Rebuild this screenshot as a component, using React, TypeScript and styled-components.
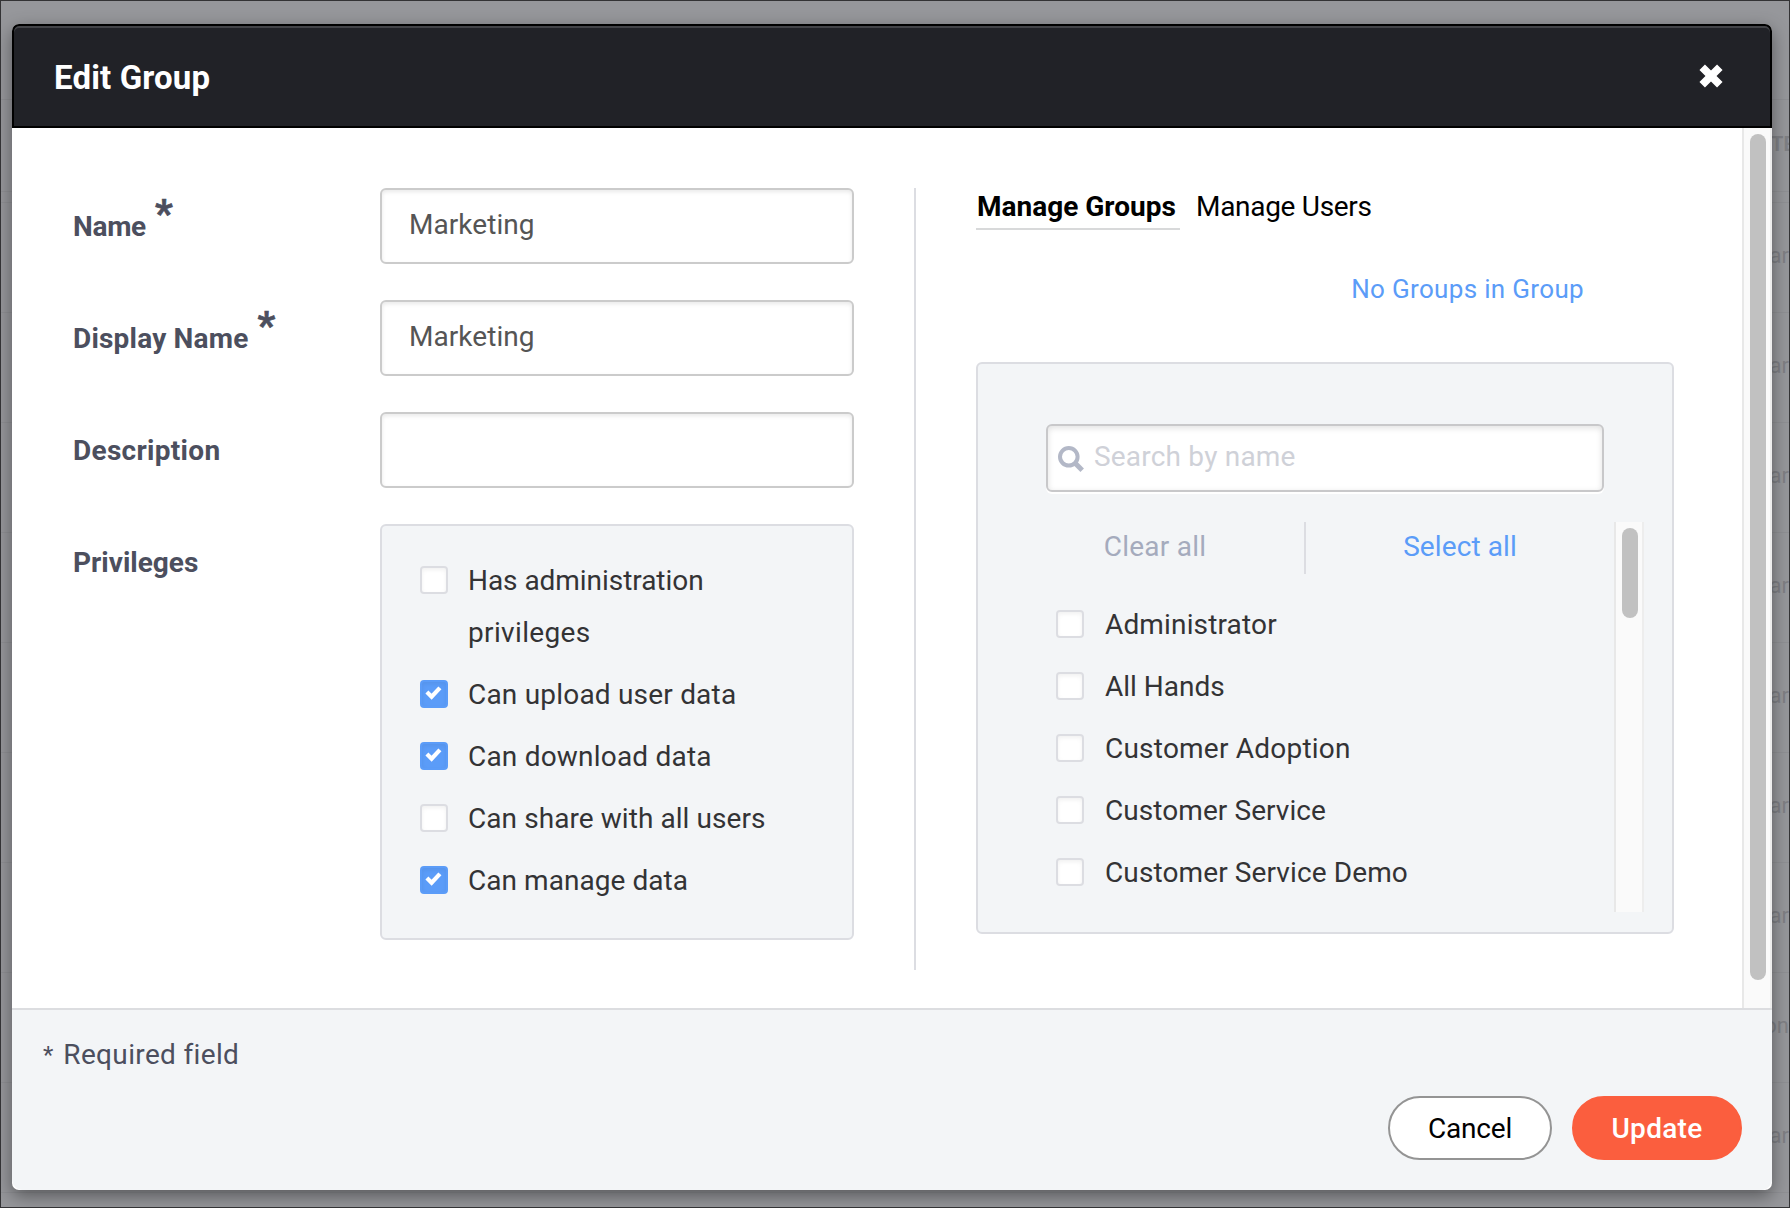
import React, { useState } from "react";
import styled, { createGlobalStyle, css } from "styled-components";

const ink = "#333335";
const slate = "#4c4f5e";
const blue = "#5b9cf8";
const line = "#dcdde2";
const panel = "#f3f5f7";

const GlobalStyle = createGlobalStyle`
  *, *::before, *::after { box-sizing: border-box; }
  body {
    margin: 0;
    overflow: hidden;
    font-family: Roboto, "Liberation Sans", sans-serif;
    font-size: 28px;
    color: ${ink};
  }
`;

const Page = styled.div`
  position: relative;
  width: 1790px;
  height: 1208px;
  border: 1px solid #333335;
  overflow: hidden;
  background: #96979b;
  padding: 23px 17px 17px 11px;
`;

const Backdrop = styled.div`
  position: absolute;
  inset: 0;
  display: flex;
  flex-direction: column;
`;

const BackBand = styled.div<{ $h: number }>`
  flex: none;
  height: ${(p) => p.$h}px;
  border-bottom: 1px solid #8f9094;
  display: flex;
  justify-content: flex-end;
`;

const BackText = styled.span<{ $bold?: boolean; $top: number }>`
  width: ${(p) => (p.$bold ? "18px" : "auto")};
  margin-top: ${(p) => p.$top}px;
  white-space: nowrap;
  color: #7f8085;
  font-size: ${(p) => (p.$bold ? 20 : 22)}px;
  font-weight: ${(p) => (p.$bold ? 700 : 400)};
  line-height: 32px;
`;

const Modal = styled.div`
  position: relative;
  width: 1760px;
  height: 1166px;
  display: flex;
  flex-direction: column;
  background: #fff;
  border-radius: 7px;
  box-shadow: 0 6px 18px rgba(0, 0, 0, 0.42);
`;

const Header = styled.header`
  flex: none;
  height: 104px;
  display: flex;
  align-items: center;
  justify-content: space-between;
  padding: 0 47px 0 40px;
  border: 2px solid #000;
  border-radius: 7px 7px 0 0;
  background: #212227;
  box-shadow: inset 0 2px 0 #434448;
`;

const Title = styled.h1`
  margin: 3px 0 0;
  color: #fff;
  font-size: 33px;
  line-height: 40px;
  font-weight: 700;
  letter-spacing: 0.15px;
`;

const CloseButton = styled.button`
  display: flex;
  padding: 0;
  border: 0;
  background: none;
  svg { display: block; }
`;

const Body = styled.div`
  flex: none;
  height: 880px;
  display: flex;
`;

const Content = styled.div`
  flex: 1;
  display: flex;
  padding: 60px 0 0 61px;
`;

const Form = styled.div`
  width: 781px;
  margin-right: 60px;
  display: flex;
  flex-direction: column;
  gap: 36px;
`;

const Field = styled.div`
  display: flex;
`;

const Label = styled.label<{ $ls?: number }>`
  width: 307px;
  padding-top: 18px;
  line-height: 42px;
  font-weight: 700;
  color: ${slate};
  letter-spacing: ${(p) => p.$ls ?? 0}px;
`;

const Required = styled.sup`
  margin-left: 9px;
  font-size: 39px;
  line-height: 0;
  vertical-align: 9px;
  -webkit-text-stroke: 0.7px ${slate};
`;

const Input = styled.input`
  width: 474px;
  height: 76px;
  padding: 0 27px 4px;
  border: 2px solid #cbcbcb;
  border-radius: 6px;
  background: #fff;
  box-shadow: inset 0 2px 4px rgba(0, 0, 0, 0.09);
  color: #555;
  font: inherit;
  letter-spacing: 0.05px;
  outline: none;
`;

const Panel = styled.div`
  border: 2px solid ${line};
  border-radius: 6px;
  background: ${panel};
`;

const Privileges = styled(Panel)`
  width: 474px;
  height: 416px;
  padding: 28px 38px 0;
  display: flex;
  flex-direction: column;
  gap: 10px;
`;

const CheckRow = styled.label<{ $gap: number }>`
  display: flex;
  gap: ${(p) => p.$gap}px;
  line-height: 52px;
`;

const CheckText = styled.span<{ $ls: number; $firstLs?: number }>`
  margin: 1px 0 -1px;
  letter-spacing: ${(p) => p.$ls}px;
  ${(p) => p.$firstLs !== undefined && css`
    &::first-line { letter-spacing: ${p.$firstLs}px; }
  `}
`;

const Box = styled.span<{ $on?: boolean }>`
  flex: none;
  width: 28px;
  height: 28px;
  margin-top: 12px;
  border-radius: 4px;
  border: 2px solid ${line};
  background: #fff;
  box-shadow: inset 0 2px 4px rgba(0, 0, 0, 0.06);
  ${(p) => p.$on && css`
    border-color: ${blue};
    background: ${blue};
  `}
  svg { display: block; }
`;

const Divider = styled.div<{ $h: number }>`
  flex: none;
  width: 2px;
  height: ${(p) => p.$h}px;
  background: ${line};
`;

const Members = styled.section`
  width: 698px;
  margin-left: 60px;
  display: flex;
  flex-direction: column;
`;

const Tabs = styled.nav`
  display: flex;
  gap: 16px;
  height: 42px;
`;

const Tab = styled.button<{ $active?: boolean; $ls: number }>`
  width: ${(p) => (p.$active ? 204 : 190)}px;
  padding: 0 0 4px ${(p) => (p.$active ? 1 : 0)}px;
  border: 0;
  border-bottom: 2px solid ${(p) => (p.$active ? "#d8d9da" : "transparent")};
  background: none;
  color: #000;
  font: inherit;
  font-weight: ${(p) => (p.$active ? 700 : 400)};
  text-align: left;
  white-space: nowrap;
  letter-spacing: ${(p) => p.$ls}px;
`;

const Summary = styled.p`
  margin: 42px 0 0;
  padding-right: 90px;
  height: 90px;
  line-height: 34px;
  text-align: right;
  font-size: 26px;
  color: ${blue};
  letter-spacing: 0.33px;
`;

const Picker = styled(Panel)`
  height: 572px;
  padding: 60px 28px 0;
`;

const Search = styled.div`
  width: 558px;
  height: 68px;
  margin-left: 40px;
  padding: 0 10px;
  display: flex;
  align-items: center;
  gap: 10px;
  border: 2px solid #c8c8ca;
  border-radius: 6px;
  background: #fff;
  box-shadow: inset 0 2px 6px rgba(0, 0, 0, 0.12), 0 2px 0 #fff;
  svg { flex: none; margin-top: 2px; }
`;

const SearchInput = styled.input`
  flex: 1;
  min-width: 0;
  padding: 0 0 4px;
  border: 0;
  outline: 0;
  background: none;
  font: inherit;
  letter-spacing: 0.2px;
  &::placeholder { color: #cfd1d8; opacity: 1; }
`;

const ListArea = styled.div`
  display: flex;
  height: 390px;
  margin-top: 30px;
`;

const List = styled.div`
  width: 608px;
`;

const Actions = styled.div`
  display: flex;
  height: 52px;
`;

const Action = styled.button<{ $muted?: boolean }>`
  width: ${(p) => (p.$muted ? 298 : 308)}px;
  padding: 0 0 4px;
  border: 0;
  background: none;
  font: inherit;
  letter-spacing: ${(p) => (p.$muted ? 0.25 : 0.1)}px;
  color: ${(p) => (p.$muted ? "#a5abbd" : blue)};
`;

const Groups = styled.div`
  margin-top: 24px;
  padding-left: 50px;
  display: flex;
  flex-direction: column;
  gap: 10px;
`;

const Track = styled.div`
  flex: none;
  width: 30px;
  padding: 6px;
  border-left: 2px solid #e8e8e8;
  border-right: 2px solid #ededed;
  background: #fafafa;
`;

const Thumb = styled.div<{ $h: number }>`
  width: 16px;
  height: ${(p) => p.$h}px;
  border-radius: 8px;
  background: #c1c1c1;
`;

const Footer = styled.footer`
  flex: 1;
  display: flex;
  flex-direction: column;
  justify-content: space-between;
  padding: 25px 30px 30px 31px;
  border-top: 2px solid #dcdde0;
  border-radius: 0 0 11px 11px;
  background: ${panel};
`;

const Hint = styled.p`
  margin: 0;
  line-height: 40px;
  color: ${slate};
  letter-spacing: 0.35px;
`;

const Star = styled.span`
  display: inline-block;
  width: 13px;
  font-size: 24px;
  line-height: 1;
  vertical-align: 1px;
`;

const Buttons = styled.div`
  display: flex;
  justify-content: flex-end;
  gap: 20px;
`;

const Button = styled.button<{ $primary?: boolean }>`
  width: ${(p) => (p.$primary ? 170 : 164)}px;
  height: 64px;
  padding: 0;
  border-radius: 32px;
  border: 2px solid ${(p) => (p.$primary ? "#fb5e3e" : "#949494")};
  background: ${(p) => (p.$primary ? "#fb5e3e" : "#fff")};
  color: ${(p) => (p.$primary ? "#fff" : "#000")};
  font: inherit;
  font-weight: ${(p) => (p.$primary ? 500 : 400)};
  letter-spacing: ${(p) => (p.$primary ? 0.3 : -0.2)}px;
`;

const Check = () => (
  <svg width="24" height="24" viewBox="0 0 24 24" fill="none">
    <path d="M4.9 10.1 9.6 14.8 17.9 5.9" stroke="#fff" strokeWidth="4.2" />
  </svg>
);

type Item = { label: string; on?: boolean; ls: number; firstLs?: number };

const CheckItem = ({ label, on, ls, firstLs, gap }: Item & { gap: number }) => {
  const [checked, setChecked] = useState(!!on);
  return (
    <CheckRow $gap={gap} onClick={() => setChecked(!checked)}>
      <Box $on={checked}>{checked && <Check />}</Box>
      <CheckText $ls={ls} $firstLs={firstLs}>{label}</CheckText>
    </CheckRow>
  );
};

const privileges: Item[] = [
  { label: "Has administration privileges", ls: 0.35, firstLs: -0.05 },
  { label: "Can upload user data", on: true, ls: 0.2 },
  { label: "Can download data", on: true, ls: 0.2 },
  { label: "Can share with all users", ls: 0.07 },
  { label: "Can manage data", on: true, ls: 0.05 },
];

const groups: Item[] = [
  { label: "Administrator", ls: 0.15 },
  { label: "All Hands", ls: 0 },
  { label: "Customer Adoption", ls: 0.22 },
  { label: "Customer Service", ls: 0.07 },
  { label: "Customer Service Demo", ls: 0.11 },
];

const backRows = ["ar", "ar", "ar", "ar", "ar", "ar", "ar", "on", "ar"];

export default function App() {
  return (
    <>
      <GlobalStyle />
      <Page>
        <Backdrop>
          <BackBand $h={99} />
          <BackBand $h={92}><BackText $bold $top={28}>TE</BackText></BackBand>
          <BackBand $h={11} />
          {backRows.map((t, i) => (
            <BackBand key={i} $h={110}><BackText $top={37}>{t}</BackText></BackBand>
          ))}
        </Backdrop>
        <Modal>
          <Header>
            <Title>Edit Group</Title>
            <CloseButton aria-label="Close">
              <svg width="24" height="24" viewBox="0 0 24 24">
                <path d="M3.2 3.2 20.8 20.8M20.8 3.2 3.2 20.8" stroke="#fff" strokeWidth="7.8" />
              </svg>
            </CloseButton>
          </Header>
          <Body>
            <Content>
              <Form>
                <Field>
                  <Label $ls={-0.3}>Name<Required>*</Required></Label>
                  <Input defaultValue="Marketing" />
                </Field>
                <Field>
                  <Label $ls={0.2}>Display Name<Required>*</Required></Label>
                  <Input defaultValue="Marketing" />
                </Field>
                <Field>
                  <Label $ls={0.3}>Description</Label>
                  <Input />
                </Field>
                <Field>
                  <Label>Privileges</Label>
                  <Privileges>
                    {privileges.map((p) => <CheckItem key={p.label} gap={20} {...p} />)}
                  </Privileges>
                </Field>
              </Form>
              <Divider $h={782} />
              <Members>
                <Tabs>
                  <Tab $active $ls={0}>Manage Groups</Tab>
                  <Tab $ls={-0.3}>Manage Users</Tab>
                </Tabs>
                <Summary>No Groups in Group</Summary>
                <Picker>
                  <Search>
                    <svg width="26" height="26" viewBox="0 0 26 26" fill="none" stroke="#b3b8c7">
                      <circle cx="10.8" cy="10.8" r="8.8" strokeWidth="4" />
                      <path d="M17 17 24.2 24.2" strokeWidth="5" />
                    </svg>
                    <SearchInput placeholder="Search by name" />
                  </Search>
                  <ListArea>
                    <List>
                      <Actions>
                        <Action $muted>Clear all</Action>
                        <Divider $h={52} />
                        <Action>Select all</Action>
                      </Actions>
                      <Groups>
                        {groups.map((g) => <CheckItem key={g.label} gap={21} {...g} />)}
                      </Groups>
                    </List>
                    <Track><Thumb $h={90} /></Track>
                  </ListArea>
                </Picker>
              </Members>
            </Content>
            <Track><Thumb $h={846} /></Track>
          </Body>
          <Footer>
            <Hint><Star>*</Star> Required field</Hint>
            <Buttons>
              <Button>Cancel</Button>
              <Button $primary>Update</Button>
            </Buttons>
          </Footer>
        </Modal>
      </Page>
    </>
  );
}
